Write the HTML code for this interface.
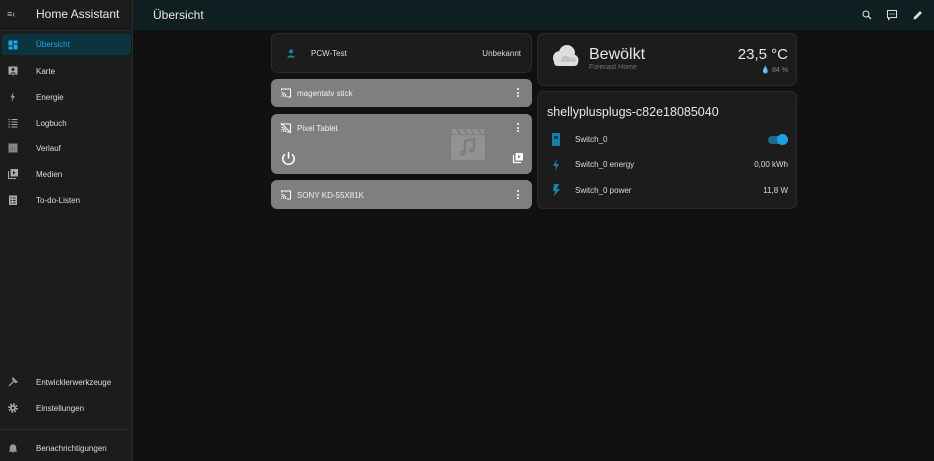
<!DOCTYPE html><html><head><meta charset="utf-8"><style>
*{box-sizing:border-box;margin:0;padding:0}
body{width:934px;height:461px;background:#111;font-family:"Liberation Sans",sans-serif;position:relative;overflow:hidden;color:#dcdcdc}
.sb{position:absolute;left:0;top:0;width:133px;height:461px;background:#1c1c1c;border-right:1px solid #2a2a2a}
.hdr{position:absolute;left:133px;top:0;right:0;height:30px;background:#0f1e21}
.abs{position:absolute}
.it{position:absolute;left:0;width:133px;height:22px;font-size:8px;color:#dcdcdc}
.it span{position:absolute;left:36px;top:7px}
.it svg{position:absolute;left:7px;top:5px}
.card{position:absolute;background:#1c1c1c;border:1px solid #2b2b2b;border-radius:7px}
.g{position:absolute;background:#7f7f7f;border-radius:6px;left:271px;width:261px;color:#f0f0f0;font-size:8px}
.dots{position:absolute;right:13px;width:2px}
.dots i{display:block;width:2px;height:2px;background:#fff;border-radius:1px;margin-bottom:1.5px}
</style></head><body>
<div class="hdr"><div class="abs" style="left:20px;top:8px;font-size:12px;color:#e8e8e8">Übersicht</div>
<svg class="abs" style="left:728px;top:9px" width="12" height="12" viewBox="0 0 24 24"><circle cx="10" cy="10" r="6" fill="none" stroke="#ddd" stroke-width="2.2"/><path d="M14.5 14.5L20 20" stroke="#ddd" stroke-width="2.5"/></svg>
<svg class="abs" style="left:753px;top:9px" width="12" height="12" viewBox="0 0 24 24"><path d="M3 3h18v14H9l-4 4v-4H3z" fill="none" stroke="#ddd" stroke-width="2"/><circle cx="8" cy="10" r="1.2" fill="#ddd"/><circle cx="12" cy="10" r="1.2" fill="#ddd"/><circle cx="16" cy="10" r="1.2" fill="#ddd"/></svg>
<svg class="abs" style="left:779px;top:9px" width="12" height="12" viewBox="0 0 24 24"><path d="M3 21l1-5L16 4l4 4L8 20z" fill="#ddd"/></svg>
</div>
<div class="sb">
<div class="abs" style="left:7px;top:9px;font-size:9px;color:#bbb">≡‹</div>
<div class="abs" style="left:36px;top:7px;font-size:12px;color:#e8e8e8">Home Assistant</div>
<div class="abs" style="left:0;top:30px;width:132px;height:1px;background:#2a2a2a"></div>
<div class="abs" style="left:2px;top:34px;width:129px;height:21px;background:#0b3340;border-radius:3px"></div>
<div class="it" style="top:34px;color:#21a6dd"><svg width="12" height="12" viewBox="0 0 24 24"><path d="M3 3h8v10H3zM13 3h8v6h-8zM13 11h8v10h-8zM3 15h8v6H3z" fill="#21a6dd"/></svg><span style="top:6px">Übersicht</span></div>
<div class="it" style="top:60px"><svg width="12" height="12" viewBox="0 0 24 24"><path d="M3 3h18v16H14l-2 2-2-2H3z" fill="#aaa"/><circle cx="12" cy="9" r="3" fill="#1c1c1c"/><path d="M6 17c1-3 11-3 12 0z" fill="#1c1c1c"/></svg><span>Karte</span></div>
<div class="it" style="top:86px"><svg width="12" height="12" viewBox="0 0 24 24"><path d="M13 2L7 13h4l-2 9 7-12h-4z" fill="#999"/></svg><span>Energie</span></div>
<div class="it" style="top:112px"><svg width="12" height="12" viewBox="0 0 24 24"><path d="M3 5h3M9 5h12M3 10h3M9 10h12M3 15h3M9 15h12M3 20h3M9 20h12" stroke="#aaa" stroke-width="1.8"/></svg><span>Logbuch</span></div>
<div class="it" style="top:137px"><svg width="12" height="12" viewBox="0 0 24 24"><rect x="3" y="3" width="18" height="18" fill="#888"/><path d="M7 17v-4M11 17v-8M15 17v-6" stroke="#666" stroke-width="2"/></svg><span>Verlauf</span></div>
<div class="it" style="top:163px"><svg width="12" height="12" viewBox="0 0 24 24"><path d="M3 6v15h15" stroke="#aaa" stroke-width="2" fill="none"/><rect x="7" y="2" width="15" height="15" fill="#aaa"/><path d="M12 6v7l5-3.5z" fill="#1c1c1c"/></svg><span>Medien</span></div>
<div class="it" style="top:189px"><svg width="12" height="12" viewBox="0 0 24 24"><rect x="4" y="3" width="16" height="19" fill="#aaa"/><path d="M7 8h3M12 8h5M7 13h3M12 13h5M7 18h3M12 18h5" stroke="#1c1c1c" stroke-width="2"/></svg><span>To-do-Listen</span></div>
<div class="it" style="top:371px"><svg width="12" height="12" viewBox="0 0 24 24"><path d="M4 20l9-9M12 4l8 8-3 1-6-6z" stroke="#999" stroke-width="2.5" fill="#999"/></svg><span>Entwicklerwerkzeuge</span></div>
<div class="it" style="top:397px"><svg width="12" height="12" viewBox="0 0 24 24"><circle cx="12" cy="12" r="7" fill="none" stroke="#aaa" stroke-width="5" stroke-dasharray="3 2.5"/><circle cx="12" cy="12" r="5.5" fill="#aaa"/><circle cx="12" cy="12" r="2.5" fill="#1c1c1c"/></svg><span>Einstellungen</span></div>
<div class="abs" style="left:0;top:429px;width:128px;height:1px;background:#2e2e2e"></div>
<div class="it" style="top:437px"><svg width="12" height="12" viewBox="0 0 24 24"><path d="M6 17V11a6 6 0 0112 0v6l2 2H4z M10 21h4" fill="#999" stroke="#999"/></svg><span>Benachrichtigungen</span></div>
</div>

<div class="card" style="left:271px;top:33px;width:261px;height:40px">
<svg class="abs" style="left:14px;top:14px" width="10" height="11" viewBox="0 0 24 24"><circle cx="12" cy="7" r="5" fill="#1a7fa8"/><path d="M3 22c0-7 18-7 18 0z" fill="#1a7fa8"/></svg>
<div class="abs" style="left:39px;top:15px;font-size:8px">PCW-Test</div>
<div class="abs" style="right:10px;top:15px;font-size:8px">Unbekannt</div></div>

<div class="g" style="top:79px;height:28px"><svg class="abs" style="left:9px;top:8px" width="12" height="12" viewBox="0 0 24 24"><path d="M3 7V4h18v16h-7M3 11a9 9 0 019 9M3 15a5 5 0 015 5M3 19h1" stroke="#fff" stroke-width="2" fill="none"/></svg><div class="abs" style="left:26px;top:10px">magentatv stick</div><div class="dots" style="top:9px"><i></i><i></i><i></i></div></div>

<div class="g" style="top:114px;height:60px"><svg class="abs" style="left:9px;top:8px" width="12" height="12" viewBox="0 0 24 24"><path d="M3 7V4h18v16h-7M3 11a9 9 0 019 9M3 15a5 5 0 015 5M3 19h1M2 2l20 20" stroke="#fff" stroke-width="2" fill="none"/></svg><div class="abs" style="left:26px;top:10px">Pixel Tablet</div><div class="dots" style="top:9px"><i></i><i></i><i></i></div>
<svg class="abs" style="left:180px;top:14px" width="34" height="32" viewBox="0 0 34 32"><rect x="0" y="7" width="34" height="25" rx="2" fill="#929292"/><path d="M1 1l32 0 0 5-32 0z" fill="#929292"/><path d="M6 1l3 5M13 1l3 5M20 1l3 5M27 1l3 5" stroke="#7f7f7f" stroke-width="2"/><path d="M14 25V13l9-2v11" stroke="#7f7f7f" stroke-width="2.5" fill="none"/><circle cx="12" cy="25" r="3" fill="#7f7f7f"/><circle cx="21" cy="22" r="3" fill="#7f7f7f"/></svg>
<svg class="abs" style="left:9px;top:36px" width="17" height="17" viewBox="0 0 24 24"><path d="M12 3v9M7 6a8 8 0 1010 0" stroke="#fff" stroke-width="2.2" fill="none"/></svg>
<svg class="abs" style="left:241px;top:38px" width="12" height="12" viewBox="0 0 24 24"><path d="M3 6v15h15" stroke="#fff" stroke-width="2.5" fill="none"/><rect x="7" y="2" width="15" height="15" fill="#fff"/><path d="M12 6v7l5-3.5z" fill="#7f7f7f"/></svg></div>

<div class="g" style="top:180px;height:29px"><svg class="abs" style="left:9px;top:9px" width="12" height="12" viewBox="0 0 24 24"><path d="M3 7V4h18v16h-7M3 11a9 9 0 019 9M3 15a5 5 0 015 5M3 19h1" stroke="#fff" stroke-width="2" fill="none"/></svg><div class="abs" style="left:26px;top:11px">SONY KD-55X81K</div><div class="dots" style="top:10px"><i></i><i></i><i></i></div></div>

<div class="card" style="left:537px;top:33px;width:260px;height:53px">
<svg class="abs" style="left:11px;top:10px" width="30" height="24" viewBox="0 0 30 24"><circle cx="11" cy="14" r="7" fill="#ddd"/><circle cx="18" cy="9" r="8" fill="#ddd"/><circle cx="24" cy="16" r="5.5" fill="#ddd"/><rect x="5" y="15" width="24" height="7" rx="3.5" fill="#ddd"/><path d="M12 18a5 5 0 019-4 4 4 0 016 4z" fill="#c4c4c4"/></svg>
<div class="abs" style="left:51px;top:12px;font-size:16px;color:#e8e8e8">Bewölkt</div>
<div class="abs" style="left:51px;top:30px;font-size:7px;color:#777">Forecast Home</div>
<div class="abs" style="right:8px;top:12px;font-size:15px;color:#e8e8e8">23,5 °C</div>
<div class="abs" style="right:8px;top:32px;font-size:7px;color:#888">💧 84 %</div></div>

<div class="card" style="left:537px;top:91px;width:260px;height:118px">
<div class="abs" style="left:9px;top:13px;font-size:12.5px;color:#e6e6e6">shellyplusplugs-c82e18085040</div>
<svg class="abs" style="left:14px;top:41px" width="8" height="13" viewBox="0 0 8 13"><rect x="0" y="0" width="8" height="13" rx="1" fill="#1a7fa8"/><rect x="2" y="3" width="4" height="3" fill="#0c3d52"/></svg>
<div class="abs" style="left:37px;top:43px;font-size:8px">Switch_0</div>
<div class="abs" style="left:230px;top:44px;width:17px;height:8px;border-radius:4px;background:#1a6a92"></div>
<div class="abs" style="left:239px;top:42px;width:11px;height:11px;border-radius:6px;background:#1ba2e4"></div>
<svg class="abs" style="left:14px;top:67px" width="8" height="12" viewBox="0 0 8 12"><path d="M5 0L1 7h3l-1 5 4-7H4z" fill="#1a7fa8"/></svg>
<div class="abs" style="left:37px;top:68px;font-size:8px">Switch_0 energy</div>
<div class="abs" style="right:8px;top:68px;font-size:8px">0,00 kWh</div>
<svg class="abs" style="left:14px;top:92px" width="8" height="12" viewBox="0 0 8 12"><path d="M2 0h5L5 5h3l-6 7 1-5H1z" fill="#1a7fa8"/></svg>
<div class="abs" style="left:37px;top:94px;font-size:8px">Switch_0 power</div>
<div class="abs" style="right:8px;top:94px;font-size:8px">11,8 W</div></div>
</body></html>
